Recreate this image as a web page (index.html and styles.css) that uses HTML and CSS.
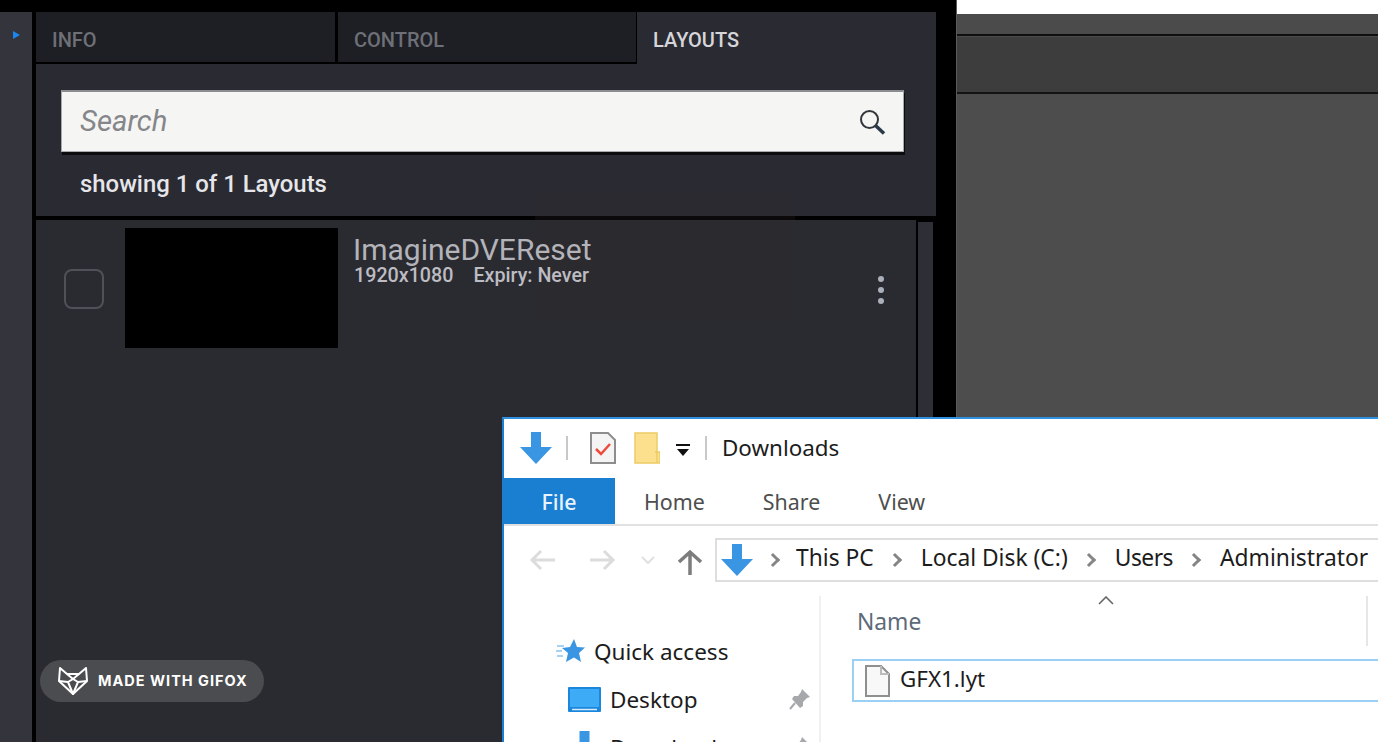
FILE: index.html
```html
<!DOCTYPE html>
<html lang="en">
<head>
<meta charset="UTF-8">
<meta name="viewport" content="width=device-width, initial-scale=1.0">
<title>Layouts</title>
<link rel="stylesheet" href="styles.css">
</head>
<body>
<div class="stage">
  <div class="rail"><span class="rail-arrow"></span></div>

  <div class="panel">
    <div class="tabs">
      <div class="tab">INFO</div>
      <div class="tab">CONTROL</div>
      <div class="tab tab-active">LAYOUTS</div>
    </div>
    <div class="search-area">
      <div class="search-box">
        <span class="search-text">Search</span>
        <svg class="search-icon" width="28" height="28" viewBox="0 0 28 28" fill="none">
          <circle cx="11.5" cy="11.5" r="8.500" stroke="#33363b" stroke-width="2"/>
          <path d="M17.5 17.5L26 25.500" stroke="#2a3a4a" stroke-width="3.500"/>
        </svg>
      </div>
      <div class="showing">showing 1 of 1 Layouts</div>
    </div>
    <div class="list-wrap">
      <div class="list">
        <div class="item">
          <div class="checkbox"></div>
          <div class="thumb"></div>
          <div class="item-info">
            <div class="item-title">ImagineDVEReset</div>
            <div class="item-meta"><span>1920x1080</span><span>Expiry: Never</span></div>
          </div>
          <div class="dots"><i></i><i></i><i></i></div>
        </div>
      </div>
      <div class="scrollbar"></div>
    </div>
  </div>

  <div class="side">
    <div class="side-white"></div>
    <div class="side-bar1"></div>
    <div class="side-bar2"></div>
    <div class="side-body"></div>
  </div>
</div>

<div class="smudge"></div>

<div class="watermark">
  <svg width="32" height="30" viewBox="0 0 32 30" fill="none" stroke="#fff" stroke-width="2" stroke-linejoin="round">
    <path d="M3 2L10 8H22L29 2L30 15L16 28L2 15Z"/>
    <path d="M10 8L16 13L22 8M2 15L11 16L16 28L21 16L30 15M11 16L16 13L21 16"/>
  </svg>
  <span class="watermark-text">MADE WITH GIFOX</span>
</div>

<div class="explorer">
  <div class="title-row">
    <svg class="ico-down" width="32" height="32" viewBox="0 0 32 32"><path d="M11 0H21V15H32L16 32L0 15H11Z" fill="#3a96e2"/></svg>
    <span class="sep"></span>
    <svg class="ico-check" width="26" height="32" viewBox="0 0 26 32" fill="#f4f4f4" stroke="#8d8d8d" stroke-width="2">
      <path d="M1 1H18L25 8V31H1Z"/>
      <path d="M6 17L11 22L20 12" fill="none" stroke="#ee4a3c" stroke-width="2.5"/>
    </svg>
    <svg class="ico-folder" width="26" height="32" viewBox="0 0 26 32" fill="#fde08e" stroke="#eccb66" stroke-width="1.5">
      <path d="M1 1H23V20H26V31H1Z"/>
      <path d="M21 20H23V31" fill="none"/>
    </svg>
    <svg class="ico-drop" width="14" height="14" viewBox="0 0 14 14"><path d="M0 1H14V3H0ZM1 6H13L7 13Z" fill="#111"/></svg>
    <span class="sep sep-b"></span>
    <span class="title-text">Downloads</span>
  </div>

  <div class="ribbon">
    <div class="rib-tab rib-file">File</div>
    <div class="rib-tab">Home</div>
    <div class="rib-tab">Share</div>
    <div class="rib-tab">View</div>
  </div>

  <div class="nav-row">
    <svg class="ico-nav" width="28" height="24" viewBox="0 0 28 24" fill="none" stroke="#dcdcdc" stroke-width="3"><path d="M26 12H3M12 3L3 12L12 21"/></svg>
    <svg class="ico-nav" width="28" height="24" viewBox="0 0 28 24" fill="none" stroke="#dcdcdc" stroke-width="3"><path d="M2 12H25M16 3L25 12L16 21"/></svg>
    <svg class="ico-nav-small" width="14" height="8" viewBox="0 0 14 8" fill="none" stroke="#e0e0e0" stroke-width="2"><path d="M1 1L7 7L13 1"/></svg>
    <svg class="ico-up" width="26" height="26" viewBox="0 0 26 26" fill="none" stroke="#7d7d7d" stroke-width="3.5"><path d="M13 26V3M2 13L13 3L24 13"/></svg>
    <div class="address">
      <svg class="ico-addr" width="32" height="32" viewBox="0 0 32 32"><path d="M11 0H21V15H32L16 32L0 15H11Z" fill="#3a96e2"/></svg>
      <span class="crumb-sep first"></span><span class="crumb">This PC</span>
      <span class="crumb-sep"></span><span class="crumb">Local Disk (C:)</span>
      <span class="crumb-sep"></span><span class="crumb crumb-tight">Users</span>
      <span class="crumb-sep"></span><span class="crumb">Administrator</span>
    </div>
  </div>

  <div class="browse">
    <div class="tree">
      <div class="tree-item tree-head">
        <svg width="30" height="26" viewBox="0 0 30 26"><path d="M18 1L21 9L29 9.500L23 15L25 24L18 19.500L10 24L12 15L6 10L14 9Z" fill="#3a96e2"/><path d="M1 8H8M0 13H6M1 18H7" stroke="#8cc4ee" stroke-width="1.500"/></svg>
        <span>Quick access</span>
      </div>
      <div class="tree-item tree-sub">
        <svg width="33" height="25" viewBox="0 0 33 25"><rect width="33" height="25" rx="1" fill="#1a86dc"/><rect x="2" y="2" width="29" height="18" fill="#3dabf5"/><path d="M4 22.500H29" stroke="#d4ecfb" stroke-width="1.500"/></svg>
        <span>Desktop</span>
        <svg class="pin" width="22" height="22" viewBox="0 0 22 22"><path d="M13 1L21 9L18 10L14 14L14 18L11 20L3 11L5 8L9 8L12 4Z" fill="#a6a8ab"/><path d="M6 15L1 21" stroke="#a6a8ab" stroke-width="2"/></svg>
      </div>
      <div class="tree-item tree-sub">
        <svg width="33" height="32" viewBox="0 0 32 32"><path d="M11 0H21V15H32L16 32L0 15H11Z" fill="#3a96e2"/></svg>
        <span>Downloads</span>
        <svg class="pin" width="22" height="22" viewBox="0 0 22 22"><path d="M13 1L21 9L18 10L14 14L14 18L11 20L3 11L5 8L9 8L12 4Z" fill="#a6a8ab"/></svg>
      </div>
    </div>
    <div class="files">
      <div class="col-head">
        <span class="col-name">Name</span>
        <svg class="col-caret" width="16" height="9" viewBox="0 0 16 9" fill="none" stroke="#666" stroke-width="1.600"><path d="M1 8L8 1L15 8"/></svg>
        <span class="col-line"></span>
      </div>
      <div class="file-row">
        <svg width="26" height="32" viewBox="0 0 26 32" fill="#f8f8f8" stroke="#8f8f8f" stroke-width="2"><path d="M2 1H17L25 9V31H2Z"/><path d="M17 1V9H25" fill="none" stroke="#bbb"/></svg>
        <span class="file-name">GFX1.lyt</span>
      </div>
    </div>
  </div>
</div>
</body>
</html>
```

FILE: styles.css
```css
html, body {
  margin: 0;
  height: 100%;
  overflow: hidden;
  background-color: #000;
}

.stage {
  display: flex;
  height: 742px;
  font-family: Roboto, "Liberation Sans", sans-serif;
}

/* left rail */
.rail {
  width: 32px;
  margin-top: 12px;
  background-color: #33343c;
  display: flex;
  justify-content: center;
  align-items: flex-start;
  box-sizing: border-box;
}

.rail-arrow {
  margin-top: 19px;
  border-left: 7px solid #1c86ee;
  border-top: 4px solid transparent;
  border-bottom: 4px solid transparent;
}

/* main panel */
.panel {
  width: 900px;
  margin-left: 4px;
  margin-top: 12px;
  display: flex;
  flex-direction: column;
}

.tabs {
  display: flex;
  height: 52px;
  flex-shrink: 0;
}

.tab {
  width: 299px;
  height: 50px;
  margin-right: 3px;
  padding-left: 16px;
  box-sizing: border-box;
  background-color: #1e1f24;
  color: #6e7078;
  font-size: 20px;
  font-weight: 500;
  line-height: 56px;
}

.tab:nth-child(2) {
  width: 298px;
  margin-right: 1px;
}

.tab-active {
  width: 299px;
  height: 52px;
  margin-right: 0;
  background-color: #2a2b32;
  color: #d6d6da;
}

.search-area {
  height: 152px;
  flex-shrink: 0;
  background-color: #2a2b32;
  padding: 26px 32px 0 25px;
  box-sizing: border-box;
}

.search-box {
  height: 62px;
  display: flex;
  align-items: center;
  justify-content: space-between;
  box-sizing: border-box;
  padding: 0 17px 2px 18px;
  background-color: #f5f5f3;
  border: 1px solid #a8a9ac;
  border-top: 2px solid #8b8c90;
  box-shadow: 1px 3px 0 #0c0c0f;
}

.search-text {
  color: #85868a;
  font-size: 29.300px;
  font-style: italic;
}

.search-icon {
  margin-top: 2px;
}

.showing {
  margin-top: 16px;
  margin-left: 19px;
  color: #e6e6ea;
  font-size: 23.900px;
  font-weight: 500;
  line-height: 32px;
}

.list-wrap {
  flex: 1;
  margin-top: 4px;
  display: flex;
}

.list {
  width: 880px;
  background-color: #2a2b31;
}

.scrollbar {
  width: 15px;
  margin-top: 2px;
  margin-left: 2px;
  background-color: #2e2f36;
}

.item {
  display: flex;
  align-items: flex-start;
  padding-top: 8px;
}

.checkbox {
  width: 40px;
  height: 40px;
  box-sizing: border-box;
  margin-left: 28px;
  margin-top: 41px;
  border: 2px solid #4f5058;
  border-radius: 8px;
}

.thumb {
  width: 213px;
  height: 120px;
  margin-left: 21px;
  background-color: #000;
}

.item-info {
  margin-left: 16px;
  flex: 1;
  position: relative;
  z-index: 1;
}

.item-title {
  color: #b3b3b9;
  font-size: 30px;
  line-height: 28px;
  margin-top: 8px;
  margin-left: -1px;
}

.item-meta {
  display: flex;
  gap: 20px;
  margin-top: 2px;
  color: #bcbcc2;
  font-size: 19.700px;
  font-weight: 500;
  line-height: 20px;
}

.dots {
  display: flex;
  flex-direction: column;
  gap: 5px;
  margin-top: 48px;
  margin-right: 32px;
}

.dots i {
  display: block;
  width: 6px;
  height: 6px;
  border-radius: 50%;
  background-color: #aab0ba;
}

/* right side */
.side {
  width: 422px;
  margin-left: 20px;
  display: flex;
  flex-direction: column;
  border-left: 1px solid #5a5a5a;
  box-sizing: border-box;
}

.side-white {
  height: 14px;
  background-color: #fff;
}

.side-bar1 {
  height: 20px;
  background-color: #4b4b4b;
  border-bottom: 2px solid #0f0f0f;
}

.side-bar2 {
  height: 55px;
  background-color: #3d3d3d;
  border-top: 1px solid #4b4b4b;
  border-bottom: 2px solid #141414;
}

.side-body {
  flex: 1;
  background-color: #4d4d4d;
}

.smudge {
  position: absolute;
  left: 535px;
  top: 192px;
  width: 260px;
  height: 128px;
  background-color: rgba(52, 40, 40, 0.22);
}

/* watermark */
.watermark {
  position: absolute;
  left: 40px;
  top: 660px;
  width: 224px;
  height: 42px;
  box-sizing: border-box;
  padding-left: 17px;
  display: flex;
  align-items: center;
  gap: 9px;
  border-radius: 21px;
  background-color: #4b4c4f;
  color: #fff;
  font-family: Inter, "Open Sans", sans-serif;
  font-size: 14.500px;
  font-weight: 700;
  letter-spacing: 1px;
}

.watermark-text {
  padding-bottom: 2px;
}

/* explorer window */
.explorer {
  position: absolute;
  left: 502px;
  top: 417px;
  width: 876px;
  height: 325px;
  box-sizing: border-box;
  overflow: hidden;
  background-color: #fff;
  border-top: 2px solid #2e90e0;
  border-left: 2px solid #1a7fd0;
  font-family: "Noto Sans", "Open Sans", sans-serif;
  color: #1c1c1c;
}

.title-row {
  height: 59px;
  display: flex;
  align-items: center;
  padding-left: 16px;
  padding-bottom: 2px;
  box-sizing: border-box;
}

.sep {
  width: 2px;
  height: 24px;
  margin: 0 22px 0 14px;
  background-color: #c8c8c8;
}

.ico-folder {
  margin-left: 18px;
}

.ico-drop {
  margin-left: 16px;
  margin-top: 4px;
}

.sep-b {
  margin: 0 15px 0 15px;
}

.title-text {
  font-size: 22.400px;
}

.ribbon {
  height: 48px;
  display: flex;
  box-sizing: border-box;
  border-bottom: 2px solid #e1e1e1;
}

.rib-tab {
  padding: 0 29px;
  line-height: 48px;
  font-size: 21.400px;
  color: #4e4e4e;
}

.rib-file {
  width: 112px;
  padding: 0;
  margin-left: -1px;
  height: 46px;
  line-height: 48px;
  text-align: center;
  font-weight: 500;
  background-color: #1a7fd0;
  color: #e8f3fb;
}

.nav-row {
  height: 44px;
  margin-top: 12px;
  display: flex;
  align-items: center;
  padding-left: 25px;
}

.ico-nav {
  margin-right: 31px;
}

.ico-nav-small {
  margin-left: -6px;
  margin-right: 22px;
}

.ico-up {
  margin-right: 12px;
  margin-top: 4px;
}

.address {
  flex: 1;
  height: 44px;
  margin-right: -40px;
  box-sizing: border-box;
  border: 2px solid #dedede;
  display: flex;
  align-items: center;
  padding-left: 4px;
  font-size: 22.800px;
  white-space: nowrap;
}

.crumb {
  padding-bottom: 5px;
}

.crumb-tight {
  letter-spacing: -0.5px;
}

.crumb-sep {
  width: 7px;
  height: 7px;
  margin: 0 21px 0 16px;
  border-top: 3px solid #858585;
  border-right: 3px solid #858585;
  transform: rotate(45deg);
  flex-shrink: 0;
}

.crumb-sep.first {
  margin-left: 15px;
  margin-right: 18px;
}

.browse {
  display: flex;
  flex: 1;
}

.tree {
  width: 317px;
  height: 200px;
  margin-top: 14px;
  box-sizing: border-box;
  padding-top: 31px;
  border-right: 2px solid #f0f0f0;
  font-size: 22.500px;
}

.tree-item {
  display: flex;
  align-items: center;
  height: 48px;
}

.tree-head {
  padding-left: 52px;
  gap: 8px;
}

.tree-sub {
  padding-left: 64px;
  gap: 9px;
  position: relative;
}

.pin {
  position: absolute;
  left: 285px;
}

.files {
  flex: 1;
  padding-top: 14px;
}

.col-head {
  height: 50px;
  position: relative;
}

.col-name {
  position: absolute;
  left: 36px;
  top: 10px;
  font-size: 22.800px;
  color: #5d6a7a;
}

.col-caret {
  position: absolute;
  left: 277px;
  top: 0;
}

.col-line {
  position: absolute;
  left: 545px;
  top: 0;
  width: 2px;
  height: 50px;
  background-color: #e6e6e6;
}

.file-row {
  margin-top: 13px;
  margin-left: 31px;
  height: 43px;
  box-sizing: border-box;
  border: 2px solid #9bd0f5;
  border-right: none;
  display: flex;
  align-items: center;
  gap: 10px;
  padding-left: 10px;
  font-size: 22.400px;
}

.file-name {
  padding-bottom: 4px;
}
```
